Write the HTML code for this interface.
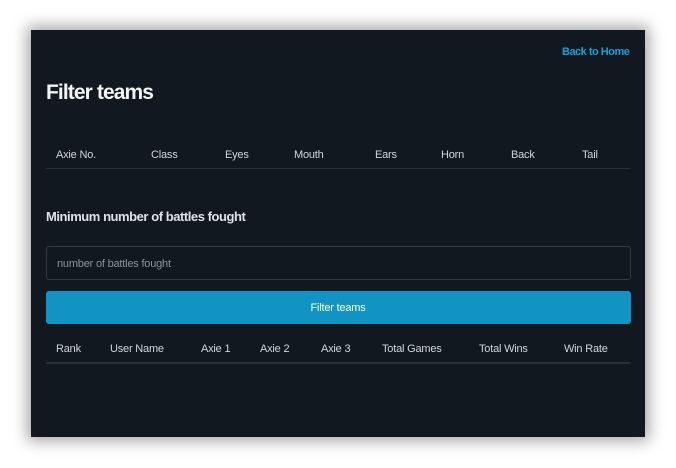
<!DOCTYPE html>
<html><head><style>
body{margin:0;width:676px;height:468px;background:#fff;font-family:"Liberation Sans",sans-serif;position:relative;overflow:hidden}
.p{position:absolute;left:31px;top:30px;width:614px;height:407px;background:#111820;box-shadow:0 0 14px 4px rgba(0,0,0,.35)}
.a{position:absolute;font-size:11px;color:#cfd6dd;letter-spacing:-0.2px;white-space:nowrap}
.line{position:absolute;left:15px;width:584px;height:1px;background:#27323d}
</style></head><body>
<div class="p">
<div class="a" style="left:531px;top:16px;color:#1a9fd6;font-weight:bold;letter-spacing:-0.5px">Back to Home</div>
<div class="a" style="left:15px;top:51px;font-size:21px;font-weight:bold;color:#f2f4f6;letter-spacing:-0.9px">Filter teams</div>
<div class="a" style="left:25px;top:119px">Axie No.</div>
<div class="a" style="left:120px;top:119px">Class</div>
<div class="a" style="left:194px;top:119px">Eyes</div>
<div class="a" style="left:263px;top:119px">Mouth</div>
<div class="a" style="left:344px;top:119px">Ears</div>
<div class="a" style="left:410px;top:119px">Horn</div>
<div class="a" style="left:480px;top:119px">Back</div>
<div class="a" style="left:551px;top:119px">Tail</div>
<div class="line" style="top:138px"></div>
<div class="a" style="left:15px;top:179px;font-size:13px;font-weight:bold;color:#dfe3e7;letter-spacing:-0.45px">Minimum number of battles fought</div>
<div style="position:absolute;left:15px;top:216px;width:583px;height:32px;border:1px solid #2e3a45;border-radius:3px"></div>
<div class="a" style="left:26px;top:228px;color:#8a939c">number of battles fought</div>
<div style="position:absolute;left:15px;top:261px;width:585px;height:33px;background:#1194c4;border-radius:3px"></div>
<div class="a" style="left:0;width:614px;text-align:center;top:272px;color:#fff">Filter teams</div>
<div class="a" style="left:25px;top:313px">Rank</div>
<div class="a" style="left:79px;top:313px">User Name</div>
<div class="a" style="left:170px;top:313px">Axie 1</div>
<div class="a" style="left:229px;top:313px">Axie 2</div>
<div class="a" style="left:290px;top:313px">Axie 3</div>
<div class="a" style="left:351px;top:313px">Total Games</div>
<div class="a" style="left:448px;top:313px">Total Wins</div>
<div class="a" style="left:533px;top:313px">Win Rate</div>
<div class="line" style="top:332px;height:2px"></div>
</div>
</body></html>
